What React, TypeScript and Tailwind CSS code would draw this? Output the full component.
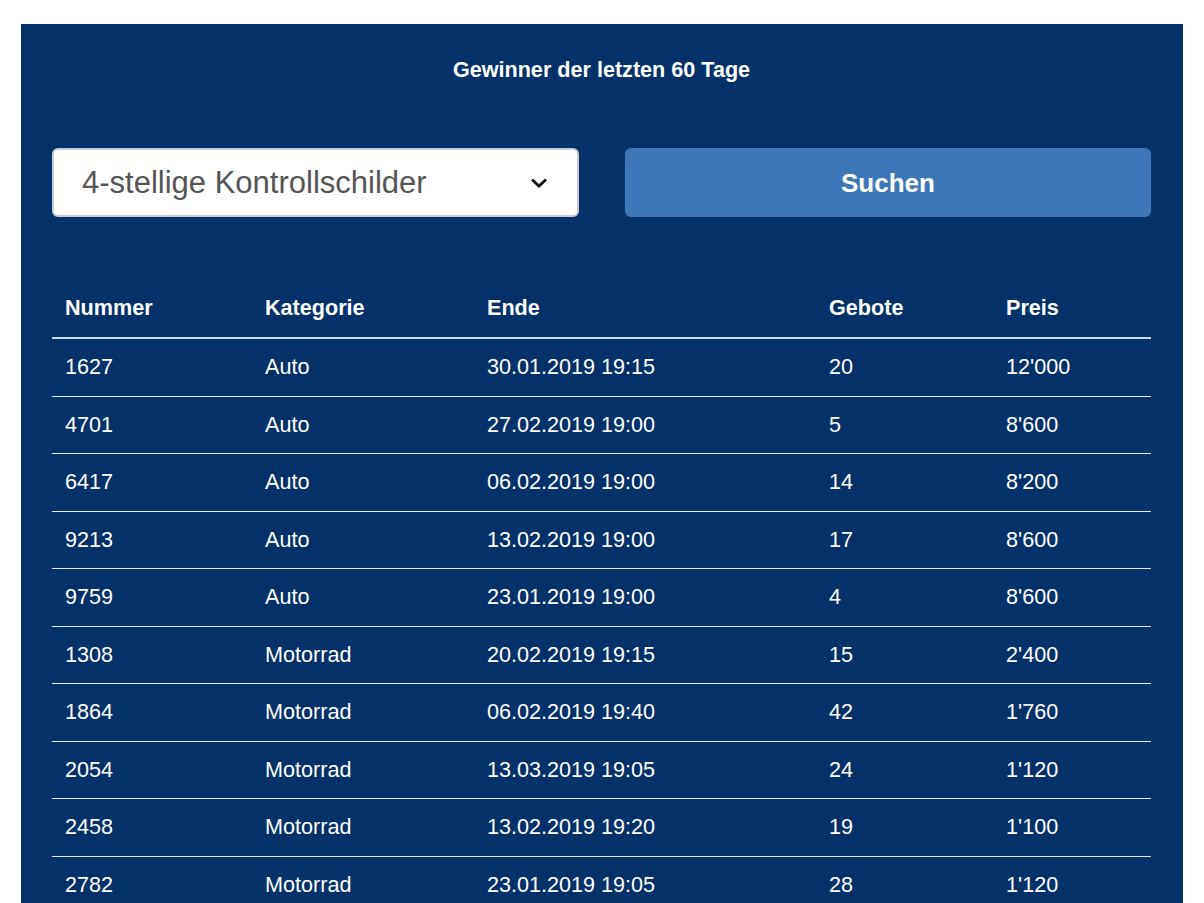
import React from "react";

const rows = [
  ["1627", "Auto", "30.01.2019 19:15", "20", "12'000"],
  ["4701", "Auto", "27.02.2019 19:00", "5", "8'600"],
  ["6417", "Auto", "06.02.2019 19:00", "14", "8'200"],
  ["9213", "Auto", "13.02.2019 19:00", "17", "8'600"],
  ["9759", "Auto", "23.01.2019 19:00", "4", "8'600"],
  ["1308", "Motorrad", "20.02.2019 19:15", "15", "2'400"],
  ["1864", "Motorrad", "06.02.2019 19:40", "42", "1'760"],
  ["2054", "Motorrad", "13.03.2019 19:05", "24", "1'120"],
  ["2458", "Motorrad", "13.02.2019 19:20", "19", "1'100"],
  ["2782", "Motorrad", "23.01.2019 19:05", "28", "1'120"],
];

const cols = "grid grid-cols-[200px_222px_342px_177px_158px]";

export default function App() {
  return (
    <div
      className="min-h-screen bg-white pt-[24px] px-[21px]"
      style={{ fontFamily: '"Liberation Sans", Arial, sans-serif' }}
    >
      <div className="bg-[#03326a] pl-[31px] pr-[32px] pt-[34px] pb-[40px] text-white">
        <div className="text-center font-bold text-[21.6px] leading-[24px]">
          Gewinner der letzten 60 Tage
        </div>
        <div className="mt-[66px] grid grid-cols-[527px_526px] gap-[46px]">
          <div className="h-[69px] bg-white rounded-[6px] border-2 border-[#c9cdd3] flex items-center justify-between pl-[28px] pr-[29px]">
            <span className="text-[#555555] text-[31px] leading-none whitespace-nowrap">
              4-stellige Kontrollschilder
            </span>
            <svg width="18" height="12" viewBox="0 0 18 12" className="mt-[1px] shrink-0">
              <path d="M2 2.5 L9 9 L16 2.5" fill="none" stroke="#111" strokeWidth="2.8" />
            </svg>
          </div>
          <div className="h-[69px] bg-[#3c78b9] rounded-[6px] flex items-center justify-center">
            <span className="font-bold text-[26px] leading-none text-white">Suchen</span>
          </div>
        </div>
        <div className="mt-[62px]">
          <div className={`${cols} h-[60px] items-center border-b-2 border-[#cfdcee] font-bold text-[21.6px]`}>
            <div className="pl-[13px]">Nummer</div>
            <div className="pl-[13px]">Kategorie</div>
            <div className="pl-[13px]">Ende</div>
            <div className="pl-[13px]">Gebote</div>
            <div className="pl-[13px]">Preis</div>
          </div>
          {rows.map((r) => (
            <div
              key={r[0]}
              className={`${cols} h-[57.5px] items-center border-b-[1.5px] border-[#e4ebf5] text-[21.6px]`}
            >
              {r.map((c, i) => (
                <div key={i} className="pl-[13px]">
                  {c}
                </div>
              ))}
            </div>
          ))}
        </div>
      </div>
    </div>
  );
}
